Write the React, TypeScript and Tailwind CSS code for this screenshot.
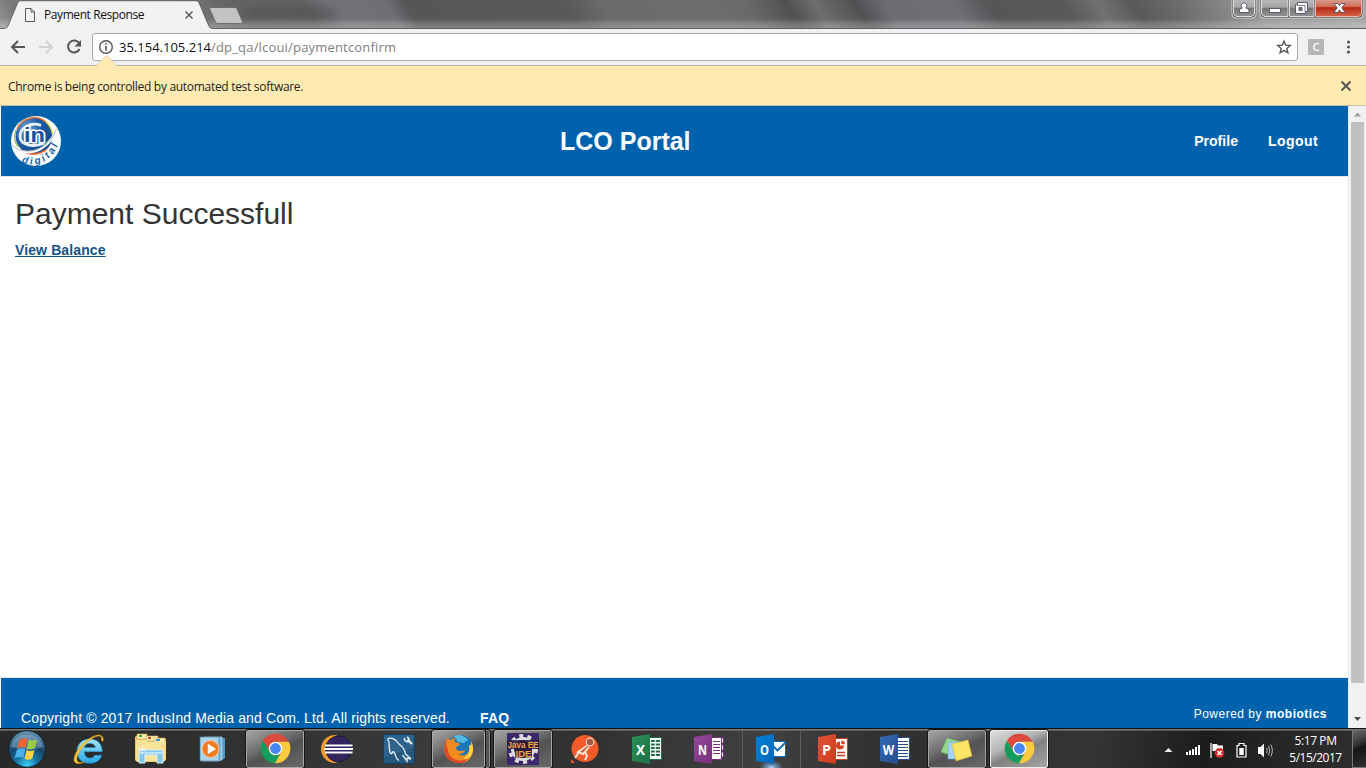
import type { ReactNode } from 'react';

const ui = "font-['Open_Sans','Noto_Sans',sans-serif]";

function TitleBar() {
  return (
    <div className="relative flex h-[29px] shrink-0 justify-between bg-[linear-gradient(to_bottom,transparent_28px,#615d64_28px),linear-gradient(to_bottom,rgba(255,255,255,0)_62%,rgba(255,255,255,0.22)_88%,rgba(255,255,255,0.26)_100%),linear-gradient(59deg,#969696_0%,#777777_2%,#7d7d7d_13%,#626365_18%,#606163_23%,#717275_25%,#6f7073_29%,#555658_30.4%,#58595b_42%,#696a6c_44.5%,#6d6e70_52%,#68696b_55%,#505153_58%,#6c6d6f_60%,#505153_63%,#6c6d71_65%,#6f7074_70%,#555658_72.5%,#58595b_78%,#717173_80.5%,#58595b_83%,#6b6b6c_86%,#9a9a9a_92%,#a4a4a4_100%)]">
      <div className="absolute left-[246px] top-[9px] h-[7px] w-[90px] bg-[#3f3f41] opacity-45 blur-[4px]" />
      <svg className="relative h-[29px] w-[250px]" viewBox="0 0 250 29" fill="none">
        <path d="M0 28.5H5.5C7 28.5 7.5 27 8 26L17.5 3C18.3 1.2 19 .8 20.500 .8H196C198 .8 198.500 1.500 199.300 3L209 25.500C210 27.800 210.500 28.500 212.500 28.500H250" stroke="#66636a" />
        <path d="M3 29C6.500 29 7.500 28 8.500 26L18 3.200C18.700 1.700 19.300 1.300 20.500 1.300H196C197.500 1.300 198 1.800 198.700 3.200L208.300 26C209.300 28 210.500 29 213 29Z" fill="#f2f2f2" />
        <path d="M211 7.500H234C236 7.500 236.500 8 237.200 9.500L242 20.500C242.800 22.500 242.500 23.500 240.500 23.500H218.500C216.500 23.500 215.800 22.700 215 21L210 9.500C209.400 8 209.500 7.500 211 7.500Z" fill="#c3c3c3" stroke="#6d6d6d" />
        <path d="M25.500 8.500H31L34.500 12V21.500H25.500ZM31 8.500V12H34.500" stroke="#5a5a5a" />
        <path d="M185.500 11.500 192.500 18.500M192.500 11.500 185.500 18.500" stroke="#5a5a5a" strokeWidth="1.500" />
      </svg>
      <span className={`${ui} absolute left-[44px] top-[6px] whitespace-nowrap text-[12px] leading-[18px] tracking-[-0.42px] text-[#111]`}>Payment Response</span>
      <svg className="relative h-[20px] w-[135px]" viewBox="0 0 135 20" fill="none">
        <defs>
          <linearGradient id="btn" x1="0" y1="0" x2="0" y2="1">
            <stop offset="0" stopColor="#b9b9b9" />
            <stop offset=".48" stopColor="#a4a4a4" />
            <stop offset=".5" stopColor="#747474" />
            <stop offset="1" stopColor="#929292" />
          </linearGradient>
          <linearGradient id="cls" x1="0" y1="0" x2="0" y2="1">
            <stop offset="0" stopColor="#d9a193" />
            <stop offset=".42" stopColor="#cf6f5c" />
            <stop offset=".5" stopColor="#b52a12" />
            <stop offset="1" stopColor="#d8624a" />
          </linearGradient>
        </defs>
        <path d="M.5 0V13Q.5 18.500 5 18.500H21Q25.500 18.500 25.500 13V0" fill="#d0d0d0" />
        <path d="M1.500 0V13Q1.500 17.500 6 17.500H20Q24.500 17.500 24.500 13V0" fill="#333" />
        <path d="M2.500 -1V13Q2.500 16.500 6 16.500H20Q23.500 16.500 23.500 13V-1" fill="url(#btn)" stroke="#ddd" />
        <path d="M28.500 0V13Q28.500 18.500 33 18.500H128Q132.500 18.500 132.500 13V0" fill="#d0d0d0" />
        <path d="M29.500 0V13Q29.500 17.500 34 17.500H127Q131.500 17.500 131.500 13V0" fill="#333" />
        <path d="M30.500 -1V13Q30.500 16.500 34 16.500H57V-1" fill="url(#btn)" stroke="#ddd" />
        <path d="M58.500 -1V16.500H83V-1" fill="url(#btn)" stroke="#ddd" />
        <path d="M84.500 -1V16.500H127Q130.500 16.500 130.500 13V-1" fill="url(#cls)" stroke="#e9b5aa" />
        <g fill="#fff" stroke="#4e5064" strokeWidth=".9">
          <path d="M8.500 12.500V10Q9 8.500 11.500 8C9 6 10.500 3 13 3S17 6 14.500 8Q17.500 8.500 18 10V12.500Z" />
          <path d="M38.500 8.500H49.500V12.500H38.500Z" />
          <path fillRule="evenodd" d="M66.500 2.500H76.500V11.500H74.500V13.500H64.500V4.500H66.500ZM68 7.500V10.500H71V7.500Z" />
          <path d="M103 3.500H106.500L108.500 5.500 110.500 3.500H114L110.800 7.800 114 12.500H110.500L108.500 10 106.500 12.500H103L106.200 7.800Z" />
        </g>
        <path d="M66 5.500H74V12" stroke="#4e5064" strokeWidth=".7" />
      </svg>
    </div>
  );
}

function Toolbar() {
  return (
    <div className="flex h-[37px] shrink-0 items-start border-b border-[#b3b3b3] bg-[#f2f1f2] pt-[4px]">
      <svg className="h-[28px] w-[92px] shrink-0" viewBox="0 0 92 28" fill="none" strokeWidth="2">
        <path d="M25 14H12.500M18 8 12 14 18 20" stroke="#555" />
        <path d="M39 14H51.500M46 8 52 14 46 20" stroke="#d2d2d2" />
        <path d="M79.300 10.500A6 6 0 1 0 79.500 16" stroke="#555" />
        <path d="M81 7V13.500H74.500Z" fill="#555" />
      </svg>
      <div className="flex h-[28px] w-[1206px] shrink-0 items-center rounded-[3px] border border-[#a9a9a9] bg-white pl-[5px] pr-[5px]">
        <svg className="h-[16px] w-[16px]" viewBox="0 0 16 16" fill="none" stroke="#555">
          <circle cx="8" cy="8" r="6.300" strokeWidth="1.400" />
          <path d="M8 7V11.500M8 4.200V5.800" strokeWidth="1.700" />
        </svg>
        <span className={`${ui} ml-[5px] flex-1 whitespace-nowrap text-[13px] leading-[20px] tracking-[0.18px] text-[#808080]`}>
          <span className="tracking-normal text-[#111]">35.154.105.214</span>/dp_qa/lcoui/paymentconfirm
        </span>
        <svg className="h-[16px] w-[16px]" viewBox="0 0 16 16" fill="none" stroke="#555" strokeWidth="1.400">
          <path d="M8 2 9.700 6.100 14.200 6.500 10.800 9.400 11.900 13.800 8 11.400 4.100 13.800 5.200 9.400 1.800 6.500 6.300 6.100Z" />
        </svg>
      </div>
      <div className="ml-[10px] mt-[6px] flex h-[16px] w-[16px] items-center justify-center rounded-[1px] bg-[#b7b7b7] font-['Open_Sans',sans-serif] text-[11px] font-semibold text-white">C</div>
      <svg className="ml-[22px] mt-[6px] h-[16px] w-[5px]" viewBox="0 0 5 16" fill="#555">
        <circle cx="2.500" cy="3" r="1.600" />
        <circle cx="2.500" cy="8" r="1.600" />
        <circle cx="2.500" cy="13" r="1.600" />
      </svg>
    </div>
  );
}

function InfoBar() {
  return (
    <div className="relative flex h-[40px] shrink-0 items-center justify-between border-b border-[#c4bda6] bg-[#ffebb2] pl-[8px] pr-[14px]">
      <svg className="absolute left-[96px] top-[-11px] h-[12px] w-[21px]" viewBox="0 0 21 12">
        <path d="M0 11 10.500 .5 21 11V12H0Z" fill="#ffebb2" />
        <path d="M0 10.500 10.500 .5 21 10.500" fill="none" stroke="#d3cbb4" strokeWidth=".8" />
      </svg>
      <span className={`${ui} whitespace-nowrap pt-[2px] text-[12px] tracking-[-0.3px] text-[#222]`}>Chrome is being controlled by automated test software.</span>
      <svg className="h-[12px] w-[12px]" viewBox="0 0 12 12" stroke="#555" strokeWidth="2">
        <path d="M1.500 1.500 10.500 10.500M10.500 1.500 1.500 10.500" />
      </svg>
    </div>
  );
}

function Logo() {
  return (
    <svg className="h-[50px] w-[50px]" viewBox="0 0 50 50">
      <defs>
        <radialGradient id="globe" cx=".3" cy=".3" r=".8">
          <stop offset="0" stopColor="#78a9d6" />
          <stop offset=".45" stopColor="#1c5ba5" />
          <stop offset="1" stopColor="#164a8b" />
        </radialGradient>
        <path id="logo-arc" d="M10.500 46.500C27 53 47 43 49 19" />
      </defs>
      <circle cx="25" cy="25" r="25" fill="#fff" />
      <circle cx="23" cy="20" r="18.500" fill="url(#globe)" />
      <path d="M6 13A18.500 18.500 0 0 1 35 6" fill="none" stroke="#ee7a34" strokeWidth="1.500" />
      <path d="M35 6A18.500 18.500 0 0 1 41.300 18" fill="none" stroke="#e0d43b" strokeWidth="1.500" />
      <path d="M5 14A18.500 18.500 0 0 0 7 31" fill="none" stroke="#8fc253" strokeWidth="1.300" />
      <path d="M10 34Q22 42 35 34" fill="none" stroke="#ef6b30" strokeWidth="1.700" />
      <path d="M30 9.500C20 5.500 8.500 12 9 21C9.500 29 22 32 33 27" fill="none" stroke="#e8f0f7" strokeWidth="2.800" />
      <text x="13" y="26" fontFamily="Liberation Sans, sans-serif" fontWeight="bold" fontSize="20" textLength="21" lengthAdjust="spacingAndGlyphs" fill="#15539c" stroke="#fff" strokeWidth="3" strokeLinejoin="round" paintOrder="stroke">in</text>
      <path d="M2 29C9 38 22 38 31 32S43 20 45 14" fill="none" stroke="#fff" strokeWidth="2.500" />
      <path d="M1 29C9 37 22 36.500 31 31S43 19 45.500 13" fill="none" stroke="#a8afb8" strokeWidth="1" />
      <text fontFamily="Liberation Sans, sans-serif" fontStyle="italic" fontWeight="bold" fontSize="10" fill="#1763aa" letterSpacing="2.600">
        <textPath href="#logo-arc">digital</textPath>
      </text>
    </svg>
  );
}

function Page() {
  return (
    <div className="flex min-h-0 flex-1 bg-white font-['Liberation_Sans',Arial,sans-serif]">
      <div className="flex min-w-0 flex-1 flex-col">
        <header className="ml-px flex h-[71px] shrink-0 items-center border-b border-[#e7e7e7] bg-[#0062ac] pl-[10px] pr-[30px] font-bold text-white">
          <Logo />
          <h1 className="ml-[499px] whitespace-nowrap text-[25px] leading-[36px]">LCO Portal</h1>
          <nav className="ml-auto flex gap-[30px] text-[14px]">
            <a className="tracking-[0.05px]">Profile</a>
            <a className="tracking-[0.42px]">Logout</a>
          </nav>
        </header>
        <main className="flex-1 pl-[15px] pt-[20px]">
          <h2 className="text-[30px] leading-[33px] text-[#333]">Payment Successfull</h2>
          <a className="mt-[10px] inline-block text-[14px] font-bold leading-[20px] tracking-[0.12px] text-[#16528a] underline">View Balance</a>
        </main>
        <footer className="ml-px flex h-[51px] shrink-0 border-t border-[#e7e7e7] bg-[#0062ac] pl-[20px] pr-[21px] text-[14px] leading-[20px] text-white">
          <span className="mt-[30px] whitespace-nowrap tracking-[0.14px]">Copyright © 2017 IndusInd Media and Com. Ltd. All rights reserved.</span>
          <b className="ml-[30px] mt-[30px] tracking-[0.2px]">FAQ</b>
          <span className="ml-auto mt-[26px] whitespace-nowrap text-[12px] tracking-[0.5px]">Powered by <b>mobiotics</b></span>
        </footer>
      </div>
      <div className="flex w-[18px] shrink-0 flex-col items-center border-l border-[#e7e7e7] bg-[#f1f1f1]">
        <svg className="h-[16px] w-[15px] shrink-0" viewBox="0 0 15 16"><path d="M4 10.500 7.500 6.500 11 10.500Z" fill="#a0a0a0" /></svg>
        <div className="h-[561px] w-[13px] bg-[#c1c1c1]" />
        <svg className="mt-auto h-[18px] w-[15px] shrink-0" viewBox="0 0 15 18"><path d="M4 7 7.500 11 11 7Z" fill="#505050" /></svg>
      </div>
    </div>
  );
}

function Chrome() {
  return (
    <svg className="h-[31px] w-[31px]" viewBox="1 1 46 46">
      <path d="M24 14H43.600A22 22 0 0 0 5.540 12.030L15.340 29A10 10 0 0 1 24 14Z" fill="#db4a3c" />
      <path d="M32.660 29 22.860 45.970A22 22 0 0 0 43.600 14H24A10 10 0 0 1 32.660 29Z" fill="#fecb3c" />
      <path d="M15.340 29 5.540 12.030A22 22 0 0 0 22.860 45.970L32.660 29A10 10 0 0 1 15.340 29Z" fill="#169c5c" />
      <circle cx="24" cy="24" r="10.200" fill="#fff" />
      <circle cx="24" cy="24" r="8" fill="#4587f3" />
    </svg>
  );
}

function StartOrb() {
  return (
    <svg className="h-[38px] w-[38px]" viewBox="0 0 38 38">
      <defs>
        <radialGradient id="orb" cx=".5" cy=".95" r=".95">
          <stop offset="0" stopColor="#3fd0f5" />
          <stop offset=".3" stopColor="#1878a8" />
          <stop offset=".6" stopColor="#174468" />
          <stop offset="1" stopColor="#6b9ab8" />
        </radialGradient>
      </defs>
      <circle cx="19" cy="19" r="18.300" fill="url(#orb)" stroke="#10222f" />
      <path d="M3 17A16.500 16.500 0 0 1 35 17Q19 22 3 17Z" fill="#b7d4e4" opacity=".35" />
      <path d="M11.500 10Q15.500 7 19.500 9L17.500 18Q13.500 16 9 18.500Z" fill="#ee6434" />
      <path d="M20.800 9.500Q24.500 11.500 29.200 9.500L27 18Q22.500 20.500 18.800 18.500Z" fill="#9bcc46" />
      <path d="M8.700 20Q13 17.500 17.200 19.500L15.200 28Q11.500 26 6.700 28.500Z" fill="#4bb0e8" />
      <path d="M18.500 20Q22 22 26.500 20L24.300 28.500Q20.500 31 16.500 28.800Z" fill="#fcd044" />
    </svg>
  );
}

function Explorer() {
  return (
    <svg className="h-[31px] w-[34px]" viewBox="0 0 34 31">
      <path d="M1 4 2 3H14L15 5H31L32 7V27L29 29H3L1 27Z" fill="#e8c868" />
      <path d="M3 1H13V6H3Z" fill="#fff0ae" stroke="#cba95b" strokeWidth=".6" />
      <path d="M12 3H24V8H12ZM20 5H31V10H20Z" fill="#fff0ae" stroke="#cba95b" strokeWidth=".6" />
      <path d="M5 2H8V4H5Z" fill="#32a645" /><path d="M14 4H17V6H14Z" fill="#d9412e" /><path d="M22 6H26V8H22Z" fill="#3293de" />
      <path d="M2 7H12L14 9H32V26L30 28H3L2 27Z" fill="#f8e39a" />
      <path d="M4 9V27M7 9V27M28 10V27M31 10V27" stroke="#efd57d" />
      <path d="M5 30V19Q5 17 7 17H27Q29 17 29 19V30H23V22H11V30Z" fill="#83c6e8" stroke="#d9f1fa" />
      <path d="M5 20H29" stroke="#b9e3f4" strokeWidth="2" />
      <path d="M8 11V21M3 16H13M5 13 11 19M11 13 5 19" stroke="#fff" strokeWidth=".8" opacity=".8" />
    </svg>
  );
}

function IE() {
  return (
    <svg className="h-[34px] w-[34px]" viewBox="0 0 32 32">
      <defs>
        <linearGradient id="ie" x1="0" y1="0" x2="0" y2="1"><stop offset="0" stopColor="#a6e7fb" /><stop offset="1" stopColor="#25a6e4" /></linearGradient>
      </defs>
      <path d="M28.500 18.500H11.500C11.800 22 13.500 24.500 16.800 24.500C19.300 24.500 20.600 23.500 21.400 21.800H28C26.500 27 22 29.500 16.500 29.500C9.500 29.500 4.800 25 4.800 18C4.800 11.300 9.500 6.500 16.700 6.500C24 6.500 28.500 11.500 28.500 18.500ZM22 14.500C21.600 12 19.700 10.800 16.800 10.800C13.900 10.800 12.200 12.200 11.600 14.500Z" fill="url(#ie)" stroke="#158bd0" strokeWidth=".5" />
      <path d="M29 9C31 3 25 .5 18 5.200C9 10 1 21 2 27C3 31 8 30 12 28C8 29 5 29 4.500 26C4 20 12 10 19 6C25 2.500 29 3.500 27.500 7.500Z" fill="#fbc832" stroke="#dc9c15" strokeWidth=".4" />
    </svg>
  );
}

function MediaPlayer() {
  return (
    <svg className="h-[28px] w-[28px]" viewBox="0 0 28 28">
      <path d="M8 3H26V23L22 26H8Z" fill="#4f9ac7" />
      <path d="M5 2H23V24L20 26H4Z" fill="#7fbde0" stroke="#d0eaf7" strokeWidth=".6" />
      <path d="M1 2H20V26H1Z" fill="#a8d5ec" stroke="#477c9b" strokeWidth=".7" />
      <circle cx="11.500" cy="14" r="8.500" fill="#ef7b22" stroke="#ffc99a" />
      <path d="M8.800 8.800 17 14 8.800 19.200Z" fill="#fff" />
    </svg>
  );
}

function Eclipse() {
  return (
    <svg className="h-[30px] w-[32px]" viewBox="0 0 32 30">
      <path d="M14 1A14 14 0 0 0 14 29L17 28A14.500 14.500 0 0 1 17 2Z" fill="#f5992c" />
      <circle cx="17.500" cy="15" r="13" fill="#33265f" stroke="#181033" strokeWidth=".8" />
      <path d="M4 11.500H31.500M3 15H32M4 18.500H31.500" stroke="#fff" strokeWidth="1.900" />
    </svg>
  );
}

function MySql() {
  return (
    <svg className="h-[30px] w-[32px]" viewBox="0 0 32 30" fill="none">
      <rect x=".5" y=".5" width="31" height="29" rx="2" fill="#26577c" stroke="#183c59" />
      <path d="M1 1H31V13L1 24Z" fill="#3a7099" opacity=".5" />
      <path d="M4.500 5C8 3 13 5 16 10C20 13 22 16 22.500 20L28 25L24 24L24 27L19.500 21M4.500 5C7 8 5.500 10 6.500 15C6.500 18 8.500 22 9.500 18C11 16 12 21 14 25L16 26.500" stroke="#e4eff6" strokeWidth="1.300" />
      <path d="M24.500 5.500 29 10" stroke="#e4eff6" strokeWidth="2.200" />
      <path d="M21.500 4A3 3 0 0 0 25.500 7.500A3 3 0 0 0 24 3" stroke="#e4eff6" strokeWidth="1.600" />
    </svg>
  );
}

function Firefox() {
  return (
    <svg className="h-[30px] w-[30px]" viewBox="0 0 30 30">
      <circle cx="16" cy="14" r="13" fill="#1b76b9" />
      <path d="M10 2Q18-1 24 6L20 9 14 8Z" fill="#53b6df" />
      <path d="M3 4Q4 6 6.500 6Q9 4 11.500 4Q10 6 11 8.500Q15 8 16 10Q15 12 12 13Q12 17 16 17Q19 17 21 16Q20 20 15 20Q18 23 23 20Q27 16 25 11Q28 13 27 7Q31 15 28 21Q24 30 14 29Q4 28 1 20Q-1 11 3 4Z" fill="#f38b20" />
      <path d="M3 4Q1 10 4 16Q5 24 13 26Q20 28 26 22Q21 30 13 29Q3 27 1 20Q-1 11 3 4Z" fill="#dc4928" />
      <path d="M25 11Q28 13 27 7Q31 15 27 22Q22 27 19 24Q27 21 25 11Z" fill="#ffd43d" />
    </svg>
  );
}

function JavaEE() {
  return (
    <svg className="h-[32px] w-[36px] overflow-visible" viewBox="-2 0 36 32">
      <rect width="32" height="32" rx="1" fill="#3b286b" />
      <circle cx="16" cy="16" r="10.500" fill="#211738" stroke="#ddd" strokeWidth="3" />
      <circle cx="16" cy="16" r="13.300" fill="none" stroke="#ddd" strokeWidth="3.400" strokeDasharray="4 4.350" />
      <path d="M0 7H32V16H25V24.500H8V16H0Z" fill="#2b1d42" opacity=".85" />
      <g fontFamily="Liberation Sans, sans-serif" fontSize="9" fontWeight="bold" fill="#f7a13b" textAnchor="middle">
        <text x="16" y="14.500" textLength="31" lengthAdjust="spacingAndGlyphs">Java EE</text>
        <text x="16.500" y="24" textLength="16" lengthAdjust="spacingAndGlyphs">IDE</text>
      </g>
    </svg>
  );
}

function Postman() {
  return (
    <svg className="h-[30px] w-[30px]" viewBox="0 0 30 30" fill="none">
      <circle cx="15" cy="14.500" r="13.500" fill="#f15a29" />
      <path d="M1 25 5 29H1Z" fill="#f15a29" />
      <circle cx="20" cy="8" r="3.800" fill="#a65a3d" stroke="#f6dccf" strokeWidth="1.200" />
      <path d="M17.500 11.500 8 18 13 20 19 13M9 18 5 24M15 18 17 22 15 26" stroke="#fae7dd" strokeWidth="1.900" />
      <path d="M18 12 11 18" stroke="#9e5a43" strokeWidth="1" />
    </svg>
  );
}

function Office({ letter, dark, light, children }: { letter: string; dark: string; light: string; children: ReactNode }) {
  return (
    <svg className="h-[32px] w-[32px]" viewBox="0 0 32 32" fill="none">
      <defs><linearGradient id={`office-${letter}`} x1="0" y1="0" x2="1" y2="1"><stop offset="0" stopColor={light} /><stop offset="1" stopColor={dark} /></linearGradient></defs>
      <g stroke={dark}>{children}</g>
      <path d="M1 4 19 1V31L1 28Z" fill={`url(#office-${letter})`} />
      <text x="9.500" y="21.500" textAnchor="middle" fontFamily="Open Sans, sans-serif" fontWeight="bold" fontSize="15" textLength={letter === 'W' ? 11.5 : 9} lengthAdjust="spacingAndGlyphs" fill="#fff">{letter}</text>
    </svg>
  );
}

function Notes() {
  return (
    <svg className="h-[28px] w-[34px]" viewBox="0 0 34 28">
      <path d="M7 3 21 7 16 22 1 17Z" fill="#98dc8b" stroke="#63b75a" strokeWidth=".6" />
      <path d="M8 7H22V24H8Z" fill="#a5d5f6" stroke="#67a8da" strokeWidth=".6" />
      <path d="M12 9 28 5 32 21 16 26Z" fill="#fce565" stroke="#d8b630" strokeWidth=".6" />
    </svg>
  );
}

function Slot({ children, frame }: { children: ReactNode; frame?: 'open' | 'active' | 'stack' | 'hover' }) {
  return (
    <div className="flex h-[39px] w-[62px] shrink-0 items-center justify-center">
      {!frame && children}
      {frame === 'open' && <div className="flex h-[38px] w-[58px] items-center justify-center rounded-[2px] border border-[#a6a6a6] bg-[linear-gradient(155deg,#a5a5a5_0%,#707070_38%,#525252_55%,#696969_100%)] outline outline-[#151515]">{children}</div>}
      {frame === 'active' && <div className="flex h-[38px] w-[58px] items-center justify-center rounded-[2px] border border-[#eee] bg-[linear-gradient(155deg,#dedede_0%,#b3b3b3_38%,#818181_55%,#a5a5a5_100%)] outline outline-[#151515]">{children}</div>}
      {frame === 'stack' && (
        <div className="flex h-[38px] w-[58px]">
          <div className="flex w-[53px] items-center justify-center rounded-[2px] border border-[#a6a6a6] bg-[linear-gradient(155deg,#a5a5a5_0%,#707070_38%,#525252_55%,#696969_100%)] outline outline-[#151515]">{children}</div>
          <div className="ml-px w-[4px] rounded-r-[2px] border border-l-0 border-[#8d8d8d] bg-[#555] outline outline-[#151515]" />
        </div>
      )}
      {frame === 'hover' && <div className="flex h-[38px] w-[59px] items-center justify-center border-x border-[#5c5c5c] bg-[radial-gradient(ellipse_12px_8px_at_50%_100%,#b9dcff_0%,#6385a8_45%,transparent_100%)]">{children}</div>}
    </div>
  );
}

function Taskbar() {
  return (
    <div className={`${ui} flex h-[40px] shrink-0 items-center overflow-hidden border-t border-[#111] bg-[linear-gradient(to_bottom,#777c80_0px,#777c80_1px,transparent_2px),linear-gradient(100deg,#292929_0%,#323232_20%,#3b3b3b_32%,#313131_43%,#404040_56%,#303030_65%,#343434_80%,#1d1d1d_88%,#303030_100%)] text-white`}>
      <div className="-ml-[4px] flex">
        <Slot><StartOrb /></Slot>
        <Slot><IE /></Slot>
        <Slot><Explorer /></Slot>
        <Slot><MediaPlayer /></Slot>
        <Slot frame="open"><Chrome /></Slot>
        <Slot><Eclipse /></Slot>
        <Slot><MySql /></Slot>
        <Slot frame="stack"><Firefox /></Slot>
        <Slot frame="open"><JavaEE /></Slot>
        <Slot><Postman /></Slot>
        <Slot>
          <Office letter="X" dark="#1e7044" light="#2c9157">
            <path d="M18 4.500H30.500V26.500H18Z" fill="#fff" />
            <path d="M20 8H29M20 11.500H29M20 15H29M20 18.500H29M20 22H29" strokeWidth="2.200" />
            <path d="M24.300 6V24" stroke="#fff" />
          </Office>
        </Slot>
        <Slot>
          <Office letter="N" dark="#76307c" light="#96479a">
            <path d="M18 4.500H28.500V26.500H18ZM28.500 5H30.500V10H28.500ZM28.500 12H30.500V17H28.500ZM28.500 19H30.500V24H28.500Z" fill="#fff" />
            <path d="M20 8.500H27M20 11.500H27M20 14.500H27M20 17.500H27M20 20.500H27" />
          </Office>
        </Slot>
        <Slot frame="hover">
          <Office letter="O" dark="#0067b9" light="#0080d7">
            <path d="M18 8.500H30.500V23.500H18Z" fill="#fff" />
            <path d="M18 13 22.500 17.500 30.500 9.500" strokeWidth="1.800" />
          </Office>
        </Slot>
        <Slot>
          <Office letter="P" dark="#cd3c20" light="#e15132">
            <path d="M18 5.500H30.500V26.500H18Z" fill="#fff" />
            <path d="M23 8.500A4 4 0 1 0 27 12.500H23Z" fill="#d24625" stroke="none" />
            <path d="M24.300 7.500V11.200H28A3.700 3.700 0 0 0 24.300 7.500Z" fill="#d24625" stroke="none" />
            <path d="M20 19.500H28M20 22.500H28" strokeWidth="1.500" />
          </Office>
        </Slot>
        <Slot>
          <Office letter="W" dark="#25508f" light="#3567b4">
            <path d="M18 4.500H30.500V26.500H18Z" fill="#fff" />
            <path d="M19 8.500H29M19 11.500H29M19 14.500H29M19 17.500H29M19 20.500H29M19 23.500H29" />
          </Office>
        </Slot>
        <Slot frame="open"><Notes /></Slot>
        <Slot frame="active"><Chrome /></Slot>
      </div>
      <svg className="ml-auto h-[20px] w-[114px] shrink-0" viewBox="1163 738 114 20" fill="none">
        <path d="M1164.500 751 1168.500 747 1172.500 751Z" fill="#eee" />
        <path d="M1187 754V751M1190 754V749.500M1193 754V748M1196 754V746M1199 754V744" stroke="#fff" strokeWidth="2" />
        <path d="M1211 742V757" stroke="#fff" strokeWidth="1.200" />
        <path d="M1212.500 743H1217L1218 744.500H1223V751H1217L1216 750H1212.500Z" fill="#fff" />
        <circle cx="1219.500" cy="752" r="4.700" fill="#dc2e2c" stroke="#a91b1b" strokeWidth=".5" />
        <path d="M1217.500 750 1221.500 754M1221.500 750 1217.500 754" stroke="#fff" strokeWidth="1.600" />
        <path d="M1239 742.500H1244V744.500H1246V756H1237V744.500H1239Z" stroke="#fff" strokeWidth="1.200" />
        <path d="M1239.300 747H1243.700V754H1239.300Z" fill="#fff" />
        <path d="M1258 746H1260.500L1264 742.500V756.500L1260.500 753H1258Z" fill="#fff" />
        <path d="M1266.500 747Q1268 749.500 1266.500 752M1268.500 745Q1271 749.500 1268.500 754M1270.700 743.500Q1274 749.500 1270.700 755.500" stroke="#ccc" strokeWidth=".9" />
      </svg>
      <div className="flex w-[75px] shrink-0 flex-col items-center whitespace-nowrap pl-[2px] text-[12px] leading-[17px] tracking-[-0.5px]">
        <span className="tracking-[-0.4px]">5:17 PM</span>
        <span>5/15/2017</span>
      </div>
      <div className="h-[39px] w-[14px] shrink-0 border border-r-0 border-[#777] bg-[linear-gradient(155deg,#6c6c6c_0%,#383838_35%,#151515_50%,#303030_100%)]" />
    </div>
  );
}

export default function App() {
  return (
    <div className="flex h-[768px] w-[1366px] flex-col overflow-hidden bg-white">
      <TitleBar />
      <Toolbar />
      <InfoBar />
      <Page />
      <Taskbar />
    </div>
  );
}
